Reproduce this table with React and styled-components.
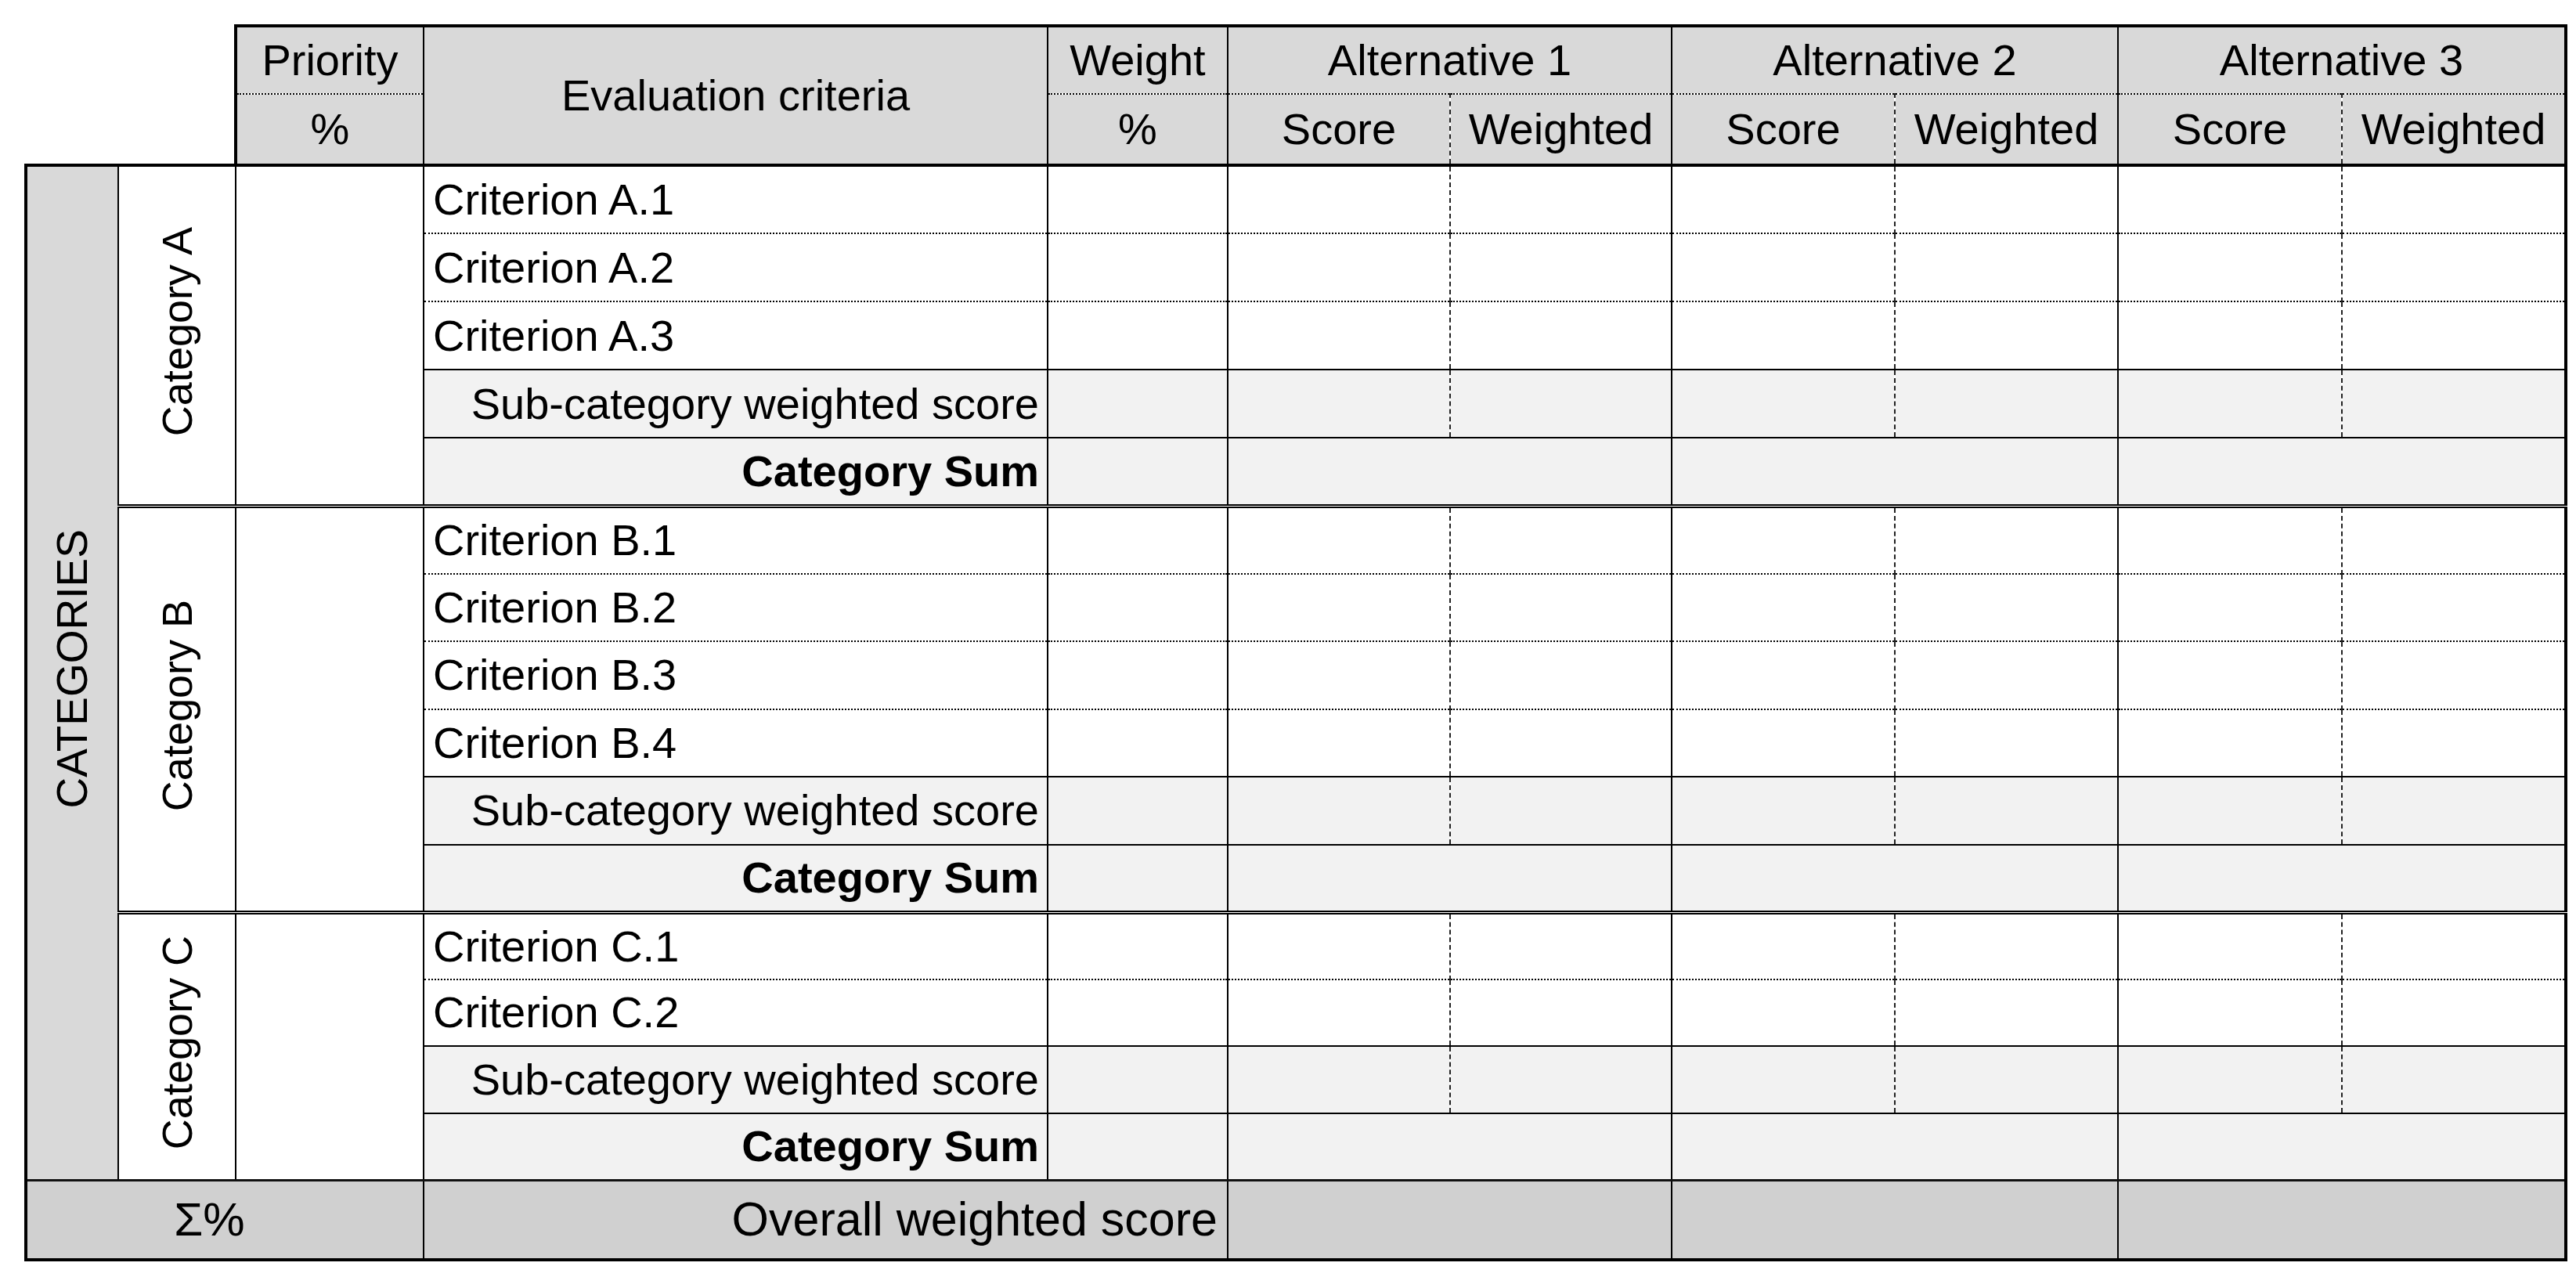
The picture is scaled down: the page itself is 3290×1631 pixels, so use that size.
import React from 'react';
import styled, { createGlobalStyle } from 'styled-components';

const GlobalStyle = createGlobalStyle`
  html, body {
    margin: 0;
    padding: 0;
    background: #fff;
  }
  body {
    font-family: "Liberation Sans", Arial, sans-serif;
  }
`;

const BORDERS = {
  none: '0 none',
  dot: '2px dotted #000',
  dash: '2px dashed #222',
  thin: '2px solid #000',
  mid: '3px solid #111',
  thick: '4px solid #000',
  double: '5px double #000',
};

const Page = styled.div`
  padding: 31px 0 0 31px;
`;

const Sheet = styled.table`
  border-collapse: collapse;
  table-layout: fixed;
  width: 3244px;
  font-family: "Liberation Sans", Arial, sans-serif;
  font-size: 56px;
  line-height: 1;
  color: #000;
`;

const Col = styled.col`
  width: ${({ $w }) => $w}px;
`;

const Row = styled.tr`
  height: ${({ $h }) => $h}px;
`;

const Cell = styled.td`
  padding: 0 ${({ $pad }) => $pad || 0}px;
  vertical-align: middle;
  text-align: ${({ $align }) => $align || 'center'};
  font-weight: ${({ $bold }) => ($bold ? 700 : 400)};
  font-size: ${({ $size }) => ($size ? `${$size}px` : 'inherit')};
  background: ${({ $bg }) => $bg || '#fff'};
  border-top: ${({ $t }) => BORDERS[$t || 'none']};
  border-right: ${({ $r }) => BORDERS[$r || 'none']};
  border-bottom: ${({ $b }) => BORDERS[$b || 'none']};
  border-left: ${({ $l }) => BORDERS[$l || 'none']};
  white-space: nowrap;
  overflow: hidden;
`;

const Corner = styled.td`
  padding: 0;
  border: 0 none;
  border-bottom: ${BORDERS.thick};
  background: #fff;
`;

const HeadCell = styled(Cell).attrs({ as: 'th', $bg: '#d9d9d9' })``;

const SubCell = styled(Cell).attrs({ $bg: '#f2f2f2' })``;

const TotalCell = styled(Cell).attrs({ $bg: '#d0d0d0' })``;

const SigmaLabel = styled.span`
  margin-right: 40px;
`;

const VerticalLabel = styled.span`
  display: inline-block;
  writing-mode: vertical-rl;
  transform: rotate(180deg);
  font-size: ${({ $size }) => $size}px;
  line-height: 1.15;
`;

const widths = [118, 150, 240, 797, 230, 284, 283, 285, 285, 286, 286];
// right border of every column from "Weight" to the last one
const dataRight = ['thin', 'dash', 'thin', 'dash', 'thin', 'dash', 'thick'];
const alts = ['Alternative 1', 'Alternative 2', 'Alternative 3'];

const sections = [
  { name: 'Category A', criteria: ['Criterion A.1', 'Criterion A.2', 'Criterion A.3'], h: 87 },
  { name: 'Category B', criteria: ['Criterion B.1', 'Criterion B.2', 'Criterion B.3', 'Criterion B.4'], h: 86.5 },
  { name: 'Category C', criteria: ['Criterion C.1', 'Criterion C.2'], h: 85.5 },
];

const totalBodyRows = sections.reduce((n, s) => n + s.criteria.length + 2, 0);

const Header = () => (
  <thead>
    <Row $h={87}>
      <Corner colSpan={2} rowSpan={2} />
      <HeadCell $t="thick" $l="thick" $r="thin" $b="dot">Priority</HeadCell>
      <HeadCell rowSpan={2} $t="thick" $r="thin" $b="thick">Evaluation criteria</HeadCell>
      <HeadCell $t="thick" $r="thin" $b="dot">Weight</HeadCell>
      {alts.map((a, i) => (
        <HeadCell key={a} colSpan={2} $t="thick" $r={i === 2 ? 'thick' : 'thin'} $b="dot">{a}</HeadCell>
      ))}
    </Row>
    <Row $h={91}>
      <HeadCell $t="dot" $l="thick" $r="thin" $b="thick">%</HeadCell>
      <HeadCell $t="dot" $r="thin" $b="thick">%</HeadCell>
      {alts.map((a, i) => (
        <React.Fragment key={a}>
          <HeadCell $t="dot" $r="dash" $b="thick">Score</HeadCell>
          <HeadCell $t="dot" $r={i === 2 ? 'thick' : 'thin'} $b="thick">Weighted</HeadCell>
        </React.Fragment>
      ))}
    </Row>
  </thead>
);

const Section = ({ section, first, last }) => {
  const span = section.criteria.length + 2;
  const edge = last ? 'mid' : 'double';

  return (
    <>
      {section.criteria.map((c, i) => {
        const bottom = i === section.criteria.length - 1 ? 'thin' : 'dot';
        return (
          <Row key={c} $h={section.h}>
            {first && i === 0 && (
              <Cell rowSpan={totalBodyRows} $bg="#d9d9d9" $l="thick" $r="thin" $b="mid">
                <VerticalLabel $size={55}>CATEGORIES</VerticalLabel>
              </Cell>
            )}
            {i === 0 && (
              <>
                <Cell rowSpan={span} $r="thin" $b={edge}>
                  <VerticalLabel $size={54}>{section.name}</VerticalLabel>
                </Cell>
                <Cell rowSpan={span} $r="thin" $b={edge} />
              </>
            )}
            <Cell $align="left" $pad={11} $r="thin" $b={bottom}>{c}</Cell>
            {dataRight.map((r, k) => (
              <Cell key={k} $r={r} $b={bottom} />
            ))}
          </Row>
        );
      })}
      <Row $h={section.h}>
        <SubCell $align="right" $pad={10} $r="thin" $b="thin">Sub-category weighted score</SubCell>
        {dataRight.map((r, k) => (
          <SubCell key={k} $r={r} $b="thin" />
        ))}
      </Row>
      <Row $h={section.h}>
        <SubCell $align="right" $pad={10} $bold $r="thin" $b={edge}>Category Sum</SubCell>
        <SubCell $r="thin" $b={edge} />
        {alts.map((a, i) => (
          <SubCell key={a} colSpan={2} $r={i === 2 ? 'thick' : 'thin'} $b={edge} />
        ))}
      </Row>
    </>
  );
};

const Totals = () => (
  <Row $h={102}>
    <TotalCell colSpan={3} $size={60} $l="thick" $r="thin" $t="mid" $b="thick">
      <SigmaLabel>Σ%</SigmaLabel>
    </TotalCell>
    <TotalCell colSpan={2} $size={61} $align="right" $pad={12} $r="thin" $t="mid" $b="thick">
      Overall weighted score
    </TotalCell>
    {alts.map((a, i) => (
      <TotalCell key={a} colSpan={2} $r={i === 2 ? 'thick' : 'thin'} $t="mid" $b="thick" />
    ))}
  </Row>
);

export default function App() {
  return (
    <>
      <GlobalStyle />
      <Page>
        <Sheet>
          <colgroup>
            {widths.map((w, i) => (
              <Col key={i} $w={w} />
            ))}
          </colgroup>
          <Header />
          <tbody>
            {sections.map((s, i) => (
              <Section key={s.name} section={s} first={i === 0} last={i === sections.length - 1} />
            ))}
            <Totals />
          </tbody>
        </Sheet>
      </Page>
    </>
  );
}
